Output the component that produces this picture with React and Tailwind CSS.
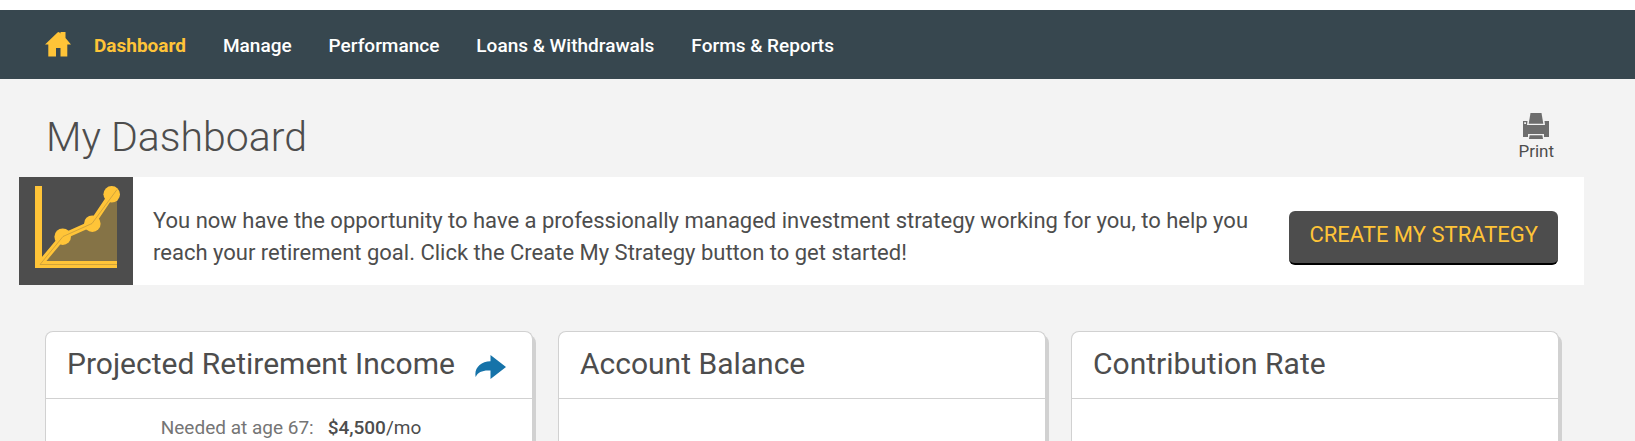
import React from 'react';

const navLinks = [
  { text: 'Dashboard', href: '#dashboard' },
  { text: 'Manage', href: '#manage' },
  { text: 'Performance', href: '#performance' },
  { text: 'Loans & Withdrawals', href: '#loans' },
  { text: 'Forms & Reports', href: '#forms' },
];

function HomeIcon() {
  return (
    <svg width="26" height="25" viewBox="0 0 26 25" fill="currentColor" aria-hidden="true">
      <path d="M0 12.5 12.5 0.5Q13.5 -0.3 14.5 0.5L15.5 1.4V0H20.5V6L26 12.5H22.3V24.5H15.5V16H11V24.5H3.3V12.5Z" />
    </svg>
  );
}

function PrintIcon() {
  return (
    <svg width="26" height="26" viewBox="0 0 26 26" fill="#6d6d6d" aria-hidden="true">
      <path d="M7.5 0H18.5L20.3 10.7H5.7Z" />
      <path fillRule="evenodd" d="M0 8H4.5L4 12H22L21.5 8H26V24H21V21H5V24H0ZM1.2 9.2V11H3V9.2Z" />
      <path d="M6.6 22.2H19.4L20 26H6Z" />
    </svg>
  );
}

function ShareIcon() {
  return (
    <svg width="31" height="24" viewBox="0 0 31 24" fill="#1673a9" aria-hidden="true">
      <path d="M15.5 0 31 12 15.5 24V15.6C8 15 3 17 0.7 22C-1.2 13.5 5.5 6.5 15.5 6.3Z" />
    </svg>
  );
}

function ChartIcon() {
  return (
    <svg width="114" height="108" viewBox="0 0 114 108" aria-hidden="true">
      <path d="M21 87 44 59.5 73 46.5 98 12.5V87Z" fill="#857346" />
      <path d="M19.5 9V87.5H98" fill="none" stroke="#ffc438" strokeWidth="7" />
      <path d="M21 87 44 59.5 73 46.5 92.5 17.5" fill="none" stroke="#ffc438" strokeWidth="6" />
      <circle cx="43.7" cy="59.7" r="8.3" fill="#ffc438" />
      <circle cx="73.3" cy="46.7" r="8.3" fill="#ffc438" />
      <circle cx="92.7" cy="17.3" r="8.3" fill="#ffc438" />
      <path d="M98 87.5H21L44 59.5 73 46.5 98 12.5" fill="none" stroke="#c79c3b" strokeWidth="0.8" />
    </svg>
  );
}

function Card({ title, icon, children }) {
  return (
    <section className="flex flex-col rounded-t-lg border border-b-0 border-[#d1d1d1] bg-white shadow-[3px_4px_0_#d1d1d1]">
      <div className="flex h-[67px] items-center gap-5 border-b border-[#d1d1d1] px-[21px]">
        <h2 className="mb-0.5 text-[30px] leading-9">{title}</h2>
        {icon}
      </div>
      {children}
    </section>
  );
}

function App() {
  return (
    <div className="flex min-h-screen flex-col border-t-[10px] border-white bg-[#f3f3f3] font-[Roboto,sans-serif] text-[#4d4d4d]">
      <nav className="flex h-[69px] shrink-0 items-center bg-[#37474f] pl-[45px] text-white">
        <a href="#home" aria-label="Home" className="text-[#ffc438]">
          <HomeIcon />
        </a>
        <div className="mt-0.5 ml-[23px] flex gap-[37px] text-[19px] leading-6">
          {navLinks.map((link, index) => (
            <a key={link.text} href={link.href} className={index === 0 ? 'font-bold text-[#ffc438]' : 'font-medium'}>
              {link.text}
            </a>
          ))}
        </div>
      </nav>

      {/* Page title */}
      <header className="flex h-[98px] shrink-0 items-end justify-between pr-[81px] pb-[14px] pl-[46px]">
        <h1 className="text-[41px] leading-[52px] font-light">My Dashboard</h1>
        <button type="button" className="flex flex-col items-center text-[17px] leading-6">
          <PrintIcon />
          Print
        </button>
      </header>

      {/* Strategy banner */}
      <section className="mr-[51px] ml-[19px] flex h-[108px] shrink-0 items-center bg-white pr-[26px]">
        <div className="shrink-0 bg-[#4d4d4d]">
          <ChartIcon />
        </div>
        <p className="mt-3 ml-5 flex-1 pr-8 text-[22px] leading-8">
          You now have the opportunity to have a professionally managed investment strategy working for you, to help you
          reach your retirement goal. Click the Create My Strategy button to get started!
        </p>
        <button
          type="button"
          className="mt-[14px] h-[54px] shrink-0 rounded-md border-b-2 border-black bg-[#4d4d4d] px-5 pb-1 text-[22px] leading-8 text-[#ffc438]"
        >
          CREATE MY STRATEGY
        </button>
      </section>

      <main className="mt-[46px] mr-[76px] ml-[45px] grid flex-1 grid-cols-3 gap-[25px]">
        <Card
          title="Projected Retirement Income"
          icon={
            <a href="#income" aria-label="Open projected retirement income" className="mt-1 shrink-0">
              <ShareIcon />
            </a>
          }
        >
          <p className="flex justify-center gap-[14px] pt-[17px] pl-1 text-[19px] leading-6">
            <span className="text-[#757575]">Needed at age 67:</span>
            <span>
              <strong className="font-medium">$4,500</strong>/mo
            </span>
          </p>
        </Card>
        <Card title="Account Balance" />
        <Card title="Contribution Rate" />
      </main>
    </div>
  );
}

export default App;
